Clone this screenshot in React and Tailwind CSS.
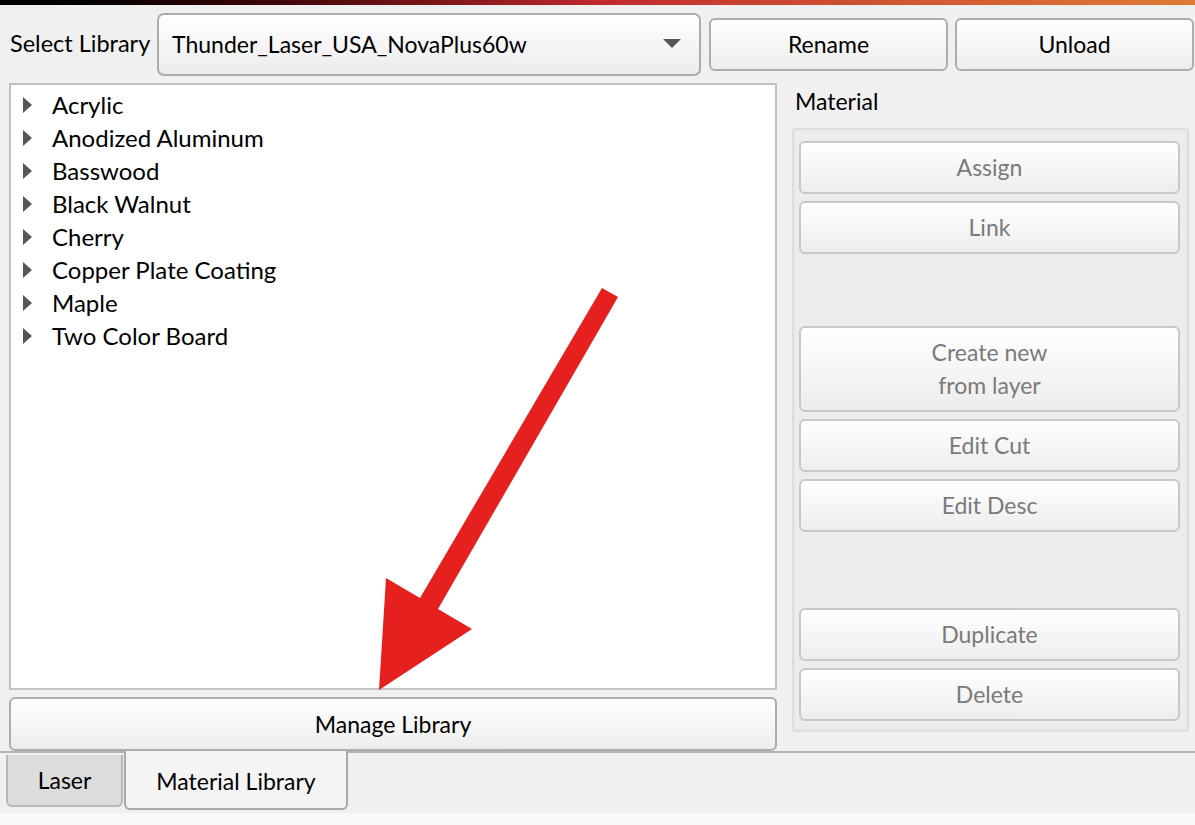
import React from 'react';

const materials = [
  'Acrylic',
  'Anodized Aluminum',
  'Basswood',
  'Black Walnut',
  'Cherry',
  'Copper Plate Coating',
  'Maple',
  'Two Color Board',
];

const font = { fontFamily: 'Lato, "Open Sans", sans-serif' };

const QtButton = ({ children, className = '', disabled = false }) => (
  <button
    className={`flex items-center justify-center rounded-[6px] border-2 bg-gradient-to-b from-white to-[#ededed] text-[23px] leading-[33px] ${
      disabled ? 'border-[#c8c8c8] text-[#7a7a7a]' : 'border-[#adadad] text-black'
    } ${className}`}
  >
    {children}
  </button>
);

const Arrow = () => (
  <svg className="absolute left-0 top-0 pointer-events-none" width="1195" height="825" viewBox="0 0 1195 825">
    <polygon
      points="602,288 618,297 438,609 472,629 379,690 386,578 420,598"
      fill="#e61f1f"
    />
  </svg>
);

export default function App() {
  return (
    <div className="relative w-[1195px] h-[825px] overflow-hidden bg-[#f0f0f0]" style={font}>
      {/* title strip */}
      <div className="h-[5px] bg-gradient-to-r from-black via-[#c0282e] to-[#e07a35]" />

      {/* library row */}
      <div className="flex items-center h-[78px] pl-[10px]">
        <span className="text-[23.5px] text-black w-[147px]">Select Library</span>
        <div className="flex items-center justify-between w-[544px] h-[63px] rounded-[7px] border-2 border-[#ababab] bg-gradient-to-b from-white to-[#ececec] pl-[13px] pr-[18px]">
          <span className="text-[23px] text-black">Thunder_Laser_USA_NovaPlus60w</span>
          <svg width="18" height="10" viewBox="0 0 18 10">
            <polygon points="0,0 18,0 9,9" fill="#555" />
          </svg>
        </div>
        <QtButton className="w-[239px] h-[53px] ml-[8px]">Rename</QtButton>
        <QtButton className="w-[239px] h-[53px] ml-[7px]">Unload</QtButton>
      </div>

      {/* main area */}
      <div className="flex pl-[9px] h-[668px]">
        <div className="flex flex-col w-[768px]">
          <div className="h-[607px] border-2 border-[#c2c2c2] bg-white pt-[3px]">
            {materials.map((m) => (
              <div key={m} className="flex items-center h-[33px]">
                <svg className="ml-[12px] mr-[20px]" width="9" height="16" viewBox="0 0 9 16">
                  <polygon points="0,0 9,8 0,16" fill="#555" />
                </svg>
                <span className="text-[24px] text-black">{m}</span>
              </div>
            ))}
          </div>
          <QtButton className="mt-[7px] h-[54px] w-full">Manage Library</QtButton>
        </div>

        <div className="flex flex-col ml-[15px] w-[397px]">
          <div className="h-[45px] pl-[3px] pt-[1px] text-[23px] text-black">Material</div>
          <div className="flex flex-col h-[604px] rounded-[3px] border-2 border-[#dedede] bg-[#ececec] pt-[11px] pl-[5px] pr-[7px] shadow-[inset_0_0_2px_rgba(0,0,0,0.08)]">
            <QtButton disabled className="h-[53px]">Assign</QtButton>
            <QtButton disabled className="h-[53px] mt-[7px]">Link</QtButton>
            <QtButton disabled className="h-[86px] mt-[72px] flex-col">
              <span>Create new</span>
              <span>from layer</span>
            </QtButton>
            <QtButton disabled className="h-[53px] mt-[7px]">Edit Cut</QtButton>
            <QtButton disabled className="h-[53px] mt-[7px]">Edit Desc</QtButton>
            <QtButton disabled className="h-[53px] mt-[76px]">Duplicate</QtButton>
            <QtButton disabled className="h-[53px] mt-[7px]">Delete</QtButton>
          </div>
        </div>
      </div>

      {/* tab bar */}
      <div className="relative h-[62px] border-t-2 border-[#b4b4b4]">
        <div className="flex items-start pl-[6px]">
          <div className="flex items-center justify-center w-[117px] h-[52px] mt-[2px] rounded-b-[6px] border-2 border-t-0 border-[#b8b8b8] bg-[#dcdcdc] text-[23px] text-black">
            Laser
          </div>
          <div className="flex items-center justify-center w-[224px] h-[59px] -mt-[2px] ml-[1px] rounded-b-[6px] border-2 border-t-0 border-[#a9a9a9] bg-[#f4f4f4] pt-[4px] text-[23px] text-black">
            Material Library
          </div>
        </div>
      </div>
      <div className="h-[12px] bg-[#f8f8f8]" />

      <Arrow />
    </div>
  );
}
